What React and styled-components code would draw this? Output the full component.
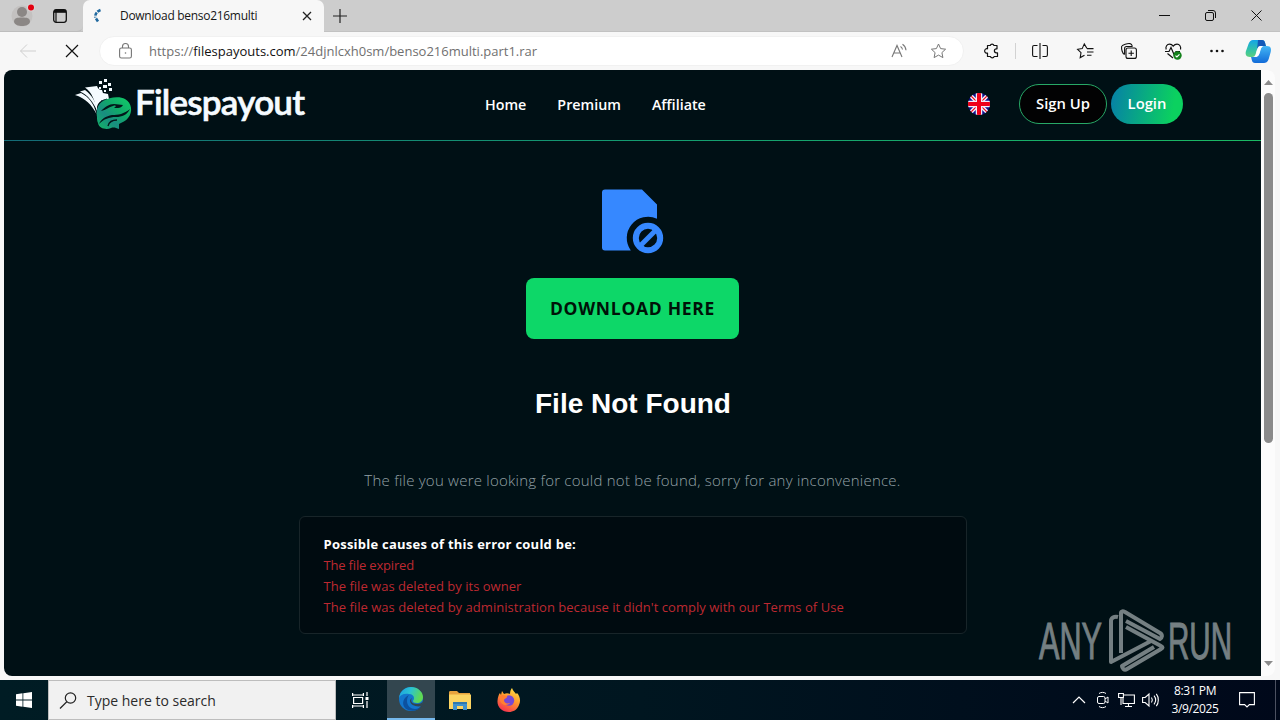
import React from "react";
import styled, { createGlobalStyle } from "styled-components";

const GlobalStyle = createGlobalStyle`
  * {
    box-sizing: border-box;
  }
  body {
    margin: 0;
    overflow: hidden;
    font-family: "Open Sans", "Noto Sans", sans-serif;
  }
  svg {
    display: block;
    flex: none;
    overflow: visible;
  }
`;

const Screen = styled.div`
  display: flex;
  flex-direction: column;
  position: relative;
  width: 1280px;
  height: 720px;
  background: #f7f7f7;
`;

const Text = styled.span`
  font-size: ${(props) => props.$size || 14}px;
  font-weight: ${(props) => props.$weight || 400};
  letter-spacing: ${(props) => props.$spacing || 0}px;
  color: ${(props) => props.$color || "inherit"};
  white-space: nowrap;
`;

/* ---------- browser tabs ---------- */

const TabBar = styled.div`
  display: flex;
  height: 32px;
  background: #cdcdcd;
  border-bottom: 1px solid #c2c2c2;
`;

const TabTools = styled.div`
  display: flex;
  align-items: center;
  gap: 17px;
  width: 83px;
  height: 32px;
  padding-left: 11px;
  border-bottom: 1px solid #bdbdbd;
  border-radius: 0 0 6px 0;
`;

const Tab = styled.div`
  display: flex;
  align-items: center;
  width: 241px;
  height: 32px;
  padding: 0 12px 0 9px;
  background: #f7f7f7;
  border-radius: 7px 7px 0 0;
`;

const TabTitle = styled(Text)`
  flex: 1;
  margin-left: 16px;
  padding-bottom: 1px;
`;

const NewTab = styled.div`
  display: flex;
  align-items: center;
  flex: 1;
  padding-left: 9px;
`;

const WindowControls = styled.div`
  display: flex;
  align-items: center;
  gap: 35px;
  padding-right: 18px;
`;

function Tabs() {
  return (
    <TabBar>
      <TabTools>
        <svg width="24" height="24" viewBox="0 0 24 24">
          <circle cx="11" cy="12" r="10.5" fill="#c3c1c0" />
          <circle cx="11" cy="8" r="5" fill="#8b8785" />
          <path d="M3 18c0-4 3-4.500 8-4.500s8 .5 8 4.500c-1 3-4.500 4-8 4s-7-1-8-4z" fill="#8b8785" />
          <circle cx="20" cy="3.500" r="4" fill="#d6d2d2" />
          <circle cx="20" cy="3.500" r="3" fill="#e3000f" />
        </svg>
        <svg width="16" height="16" viewBox="0 0 16 16" fill="none" stroke="#111">
          <rect x="1.700" y="1.700" width="12.600" height="12.600" rx="2.500" strokeWidth="1.300" />
          <path d="M2 3.300h12" strokeWidth="3" />
          <path d="M4 4v10" strokeWidth="1.200" />
        </svg>
      </TabTools>
      <Tab>
        <svg width="12" height="16" viewBox="0 0 12 16" fill="none" stroke="#20699f">
          <path d="M8.500 2C4.500 3.500 3 6.500 3.300 9.500" strokeWidth="2.600" strokeDasharray="3.500 1" />
          <path d="M4 10.500l2 3" strokeWidth="2.600" />
        </svg>
        <TabTitle $size={12} $spacing={-0.3} $color="#161616">
          Download benso216multi
        </TabTitle>
        <svg width="10" height="10" viewBox="0 0 10 10" stroke="#222" strokeWidth="1.300">
          <path d="M1 1l8 8M9 1l-8 8" />
        </svg>
      </Tab>
      <NewTab>
        <svg width="14" height="14" viewBox="0 0 14 14" stroke="#222" strokeWidth="1.200">
          <path d="M7 0v14M0 7h14" />
        </svg>
      </NewTab>
      <WindowControls>
        <svg width="11" height="11" viewBox="0 0 11 11" stroke="#111">
          <path d="M0 5.500h11" />
        </svg>
        <svg width="11" height="11" viewBox="0 0 11 11" fill="none" stroke="#111">
          <rect x=".5" y="2.500" width="8" height="8" rx="1.500" />
          <path d="M3 .5h5a2.500 2.500 0 0 1 2.500 2.500v5" />
        </svg>
        <svg width="11" height="11" viewBox="0 0 11 11" stroke="#111">
          <path d="M.5.5l10 10M10.500.5l-10 10" />
        </svg>
      </WindowControls>
    </TabBar>
  );
}

/* ---------- address bar ---------- */

const Toolbar = styled.div`
  display: flex;
  align-items: center;
  height: 38px;
  padding-left: 19px;
`;

const StopIcon = styled.svg`
  margin: 0 21px 0 29px;
`;

const AddressField = styled.div`
  display: flex;
  align-items: center;
  width: 865px;
  height: 30px;
  padding: 0 16px 0 19px;
  background: #fff;
  border: 1px solid #f1f1f1;
  border-radius: 15px;
`;

const Url = styled(Text)`
  flex: 1;
  margin-left: 17px;
  color: #707070;

  b {
    font-weight: 400;
    color: #111;
  }
`;

const ReadAloud = styled.div`
  margin-right: 22px;
`;

const ToolbarIcons = styled.div`
  display: flex;
  align-items: center;
  margin-left: 20px;
`;

const Divider = styled.div`
  width: 1px;
  height: 16px;
  margin: 0 16px 0 15px;
  background: #d2d2d2;
`;

const IconSlot = styled.div`
  width: ${(props) => props.$width || 44}px;
`;

const STAR = "M8 1l2.100 4.600 5 .6-3.700 3.400 1 5L8 12.100l-4.400 2.500 1-5L.9 6.200l5-.6z";

function AddressBar() {
  return (
    <Toolbar>
      <svg width="18" height="16" viewBox="0 0 18 16" fill="none" stroke="#cfcfcf">
        <path d="M17 8H1.500M8 1.500L1.500 8 8 14.500" />
      </svg>
      <StopIcon width="12" height="12" viewBox="0 0 12 12" stroke="#111" strokeWidth="1.200">
        <path d="M0 0l12 12M12 0L0 12" />
      </StopIcon>
      <AddressField>
        <svg width="13" height="17" viewBox="0 0 13 17" fill="none" stroke="#757575" strokeWidth="1.100">
          <rect x=".6" y="5" width="11.800" height="10" rx="1.800" />
          <path d="M3.500 5V3.500a3 3 0 0 1 6 0V5" />
          <circle cx="6.500" cy="10" r=".8" fill="#757575" stroke="none" />
        </svg>
        <Url $size={13}>
          https://<b>filespayouts.com</b>/24djnlcxh0sm/benso216multi.part1.rar
        </Url>
        <ReadAloud>
          <svg width="17" height="16" viewBox="0 0 17 16" fill="none" stroke="#777" strokeWidth="1.100">
            <path d="M1 14L6 2.500 11 14M2.700 10h6.600M9.500 3.500c1.200.7 1.800 1.700 2 3M11.500 1.200c2.200 1.400 3.300 3.300 3.500 6" />
          </svg>
        </ReadAloud>
        <svg width="17" height="16" viewBox="0 0 16 16" fill="none" stroke="#777" strokeLinejoin="round">
          <path d={STAR} />
        </svg>
      </AddressField>
      <ToolbarIcons>
        <svg width="16" height="16" viewBox="0 0 16 16" fill="none" stroke="#111" strokeWidth="1.200">
          <path
            d="M3.500 2.500h2.700a2 2 0 0 1 3.800 0h3v3.300h-.6a2 2 0 0 0 0 4h1.100v3.700h-3.300a2 2 0 0 1-3.800 0H3.500V10a2.200 2.200 0 1 1 0-4.200z"
            strokeLinejoin="round"
          />
        </svg>
        <Divider />
        <IconSlot $width={45}>
          <svg width="16" height="16" viewBox="0 0 16 16" fill="none" stroke="#111" strokeWidth="1.100">
            <path d="M8 0v16M5.500 2.500H2A1.500 1.500 0 0 0 .6 4v8A1.500 1.500 0 0 0 2 13.500h3.500M10.500 2.500H14A1.500 1.500 0 0 1 15.400 4v8a1.500 1.500 0 0 1-1.400 1.500h-3.500" />
          </svg>
        </IconSlot>
        <IconSlot>
          <svg width="17" height="16" viewBox="0 0 17 16" fill="none" stroke="#111" strokeWidth="1.100">
            <path d="M10 5.600L7.300.9 5.200 5.600l-4.600.7L4 9.700l-.8 4.900 4.300-2.400M10 5.600h6.500M10 9h6.500M10 12.300h4.500" />
          </svg>
        </IconSlot>
        <IconSlot>
          <svg width="16" height="16" viewBox="0 0 16 16" fill="none" stroke="#111" strokeWidth="1.100">
            <rect x="5" y="5" width="10.400" height="10.400" rx="2" />
            <path d="M10.200 7.500v5.400M7.500 10.200h5.400M3.500 11.500C1.500 11 .3 6 .6 3.500 1 1.500 7 .3 9 .6c1.200.2 2 1 2.200 2.400M3.600 11.500V5.500c0-1.200.8-2 2-2h6" />
          </svg>
        </IconSlot>
        <IconSlot $width={45}>
          <svg width="17" height="17" viewBox="0 0 17 17" fill="none" stroke="#111" strokeWidth="1.200">
            <path d="M1.200 6.500C.2 3.500 2 1.200 4.600 1.200 6.500 1.200 7.500 2.200 8.200 3.200 9 2.200 10 1.200 12 1.200c2.500 0 4.300 2.300 3.500 5.300M0 8.500h4l2-4 3 7 2-3h4M2.500 10.500L8 15" />
            <circle cx="12.500" cy="12.500" r="4.200" fill="#13811b" stroke="none" />
            <path d="M10.500 12.600l1.400 1.400 2.600-2.700" stroke="#fff" />
          </svg>
        </IconSlot>
        <IconSlot $width={36}>
          <svg width="14" height="4" viewBox="0 0 14 4" fill="#111">
            <circle cx="1.500" cy="2" r="1.300" />
            <circle cx="7" cy="2" r="1.300" />
            <circle cx="12.500" cy="2" r="1.300" />
          </svg>
        </IconSlot>
        <svg width="25" height="23" viewBox="0 0 25 23">
          <defs>
            <linearGradient id="pilotLeft" x1="0" y1="0" x2="0" y2="1">
              <stop offset="0" stopColor="#14a5e8" />
              <stop offset=".65" stopColor="#37c5a0" />
              <stop offset="1" stopColor="#5dcf7e" />
            </linearGradient>
            <linearGradient id="pilotRight" x1="0" y1="0" x2="0" y2="1">
              <stop offset="0" stopColor="#44b7f5" />
              <stop offset="1" stopColor="#126bd8" />
            </linearGradient>
          </defs>
          <path d="M7 0h9c3 0 3 3 4 6h-5c-3 0-4 3-5 7-1 3-2 4-4 4H4c-4 0-5-3-4-6l2.500-7C3.500 1.500 5 0 7 0z" fill="url(#pilotLeft)" />
          <path d="M12 0h4c3 0 3 3 4 6h-5c-2 0-3 1-4 4z" fill="#1459b8" />
          <path d="M18 23H9c-3 0-3-3-4-6h3c4 0 5-2 6-6 1-3.500 2-5 4-5h3c4 0 4.500 3 3.700 6l-2 7c-1 3-3 4-4.700 4z" fill="url(#pilotRight)" />
          <path d="M11.500 8.500c.6-1.700 1.500-2.500 3-2.500H17c-1.700 1-2.300 3-3 6-.8 3-2 5-5 5 1.200-2 1.500-5 2.500-8.500z" fill="#fff" />
        </svg>
      </ToolbarIcons>
    </Toolbar>
  );
}

/* ---------- site ---------- */

const Viewport = styled.div`
  display: flex;
  height: 606px;
  margin: 0 5px 4px 4px;
  overflow: hidden;
  border-radius: 8px;
  background: #fcfcfc;
`;

const Page = styled.main`
  position: relative;
  width: 1257px;
  height: 606px;
  background: #001015;
`;

const Header = styled.header`
  display: grid;
  grid-template-columns: 410px 483px 51px auto;
  align-items: center;
  height: 71px;
  padding: 0 0 3px 71px;
  border-bottom: 1px solid;
  border-image: linear-gradient(90deg, #146b77, #149b70 50%, #1bb963) 1;
`;

const Nav = styled.nav`
  display: flex;
  gap: 31px;
  padding-top: 1px;
  color: #fff;
`;

const Actions = styled.div`
  display: flex;
  gap: 4px;
`;

const PillButton = styled.button`
  display: flex;
  align-items: center;
  justify-content: center;
  width: ${(props) => props.$width}px;
  height: 40px;
  padding: 0 0 1px;
  font-family: inherit;
  color: #fff;
  background: ${(props) =>
    props.$filled ? "linear-gradient(100deg, #067fa8, #0bd15f 85%)" : "#020203"};
  border: ${(props) => (props.$filled ? "0" : "1px solid #27a866")};
  border-radius: 20px;
`;

const Content = styled.section`
  display: flex;
  flex-direction: column;
  align-items: center;
  padding-top: 48px;
`;

const DownloadButton = styled.button`
  width: 213px;
  height: 61px;
  margin-top: 24px;
  padding: 0 0 2px;
  font-family: inherit;
  color: #001208;
  background: #0dd768;
  border: 0;
  border-radius: 8px;
`;

const Title = styled.h1`
  margin: 48px 0 0 1px;
  font-family: "Liberation Sans", Arial, sans-serif;
  font-size: 28px;
  line-height: 34px;
  color: #fff;
`;

const Message = styled.p`
  margin: 46px 0 0;
  line-height: 26px;
  color: #94a1a6;
`;

const Causes = styled.div`
  display: flex;
  flex-direction: column;
  width: 668px;
  height: 118px;
  margin-top: 23px;
  padding: 17px 24px;
  line-height: 21px;
  background: #000b10;
  border: 1px solid #182529;
  border-radius: 6px;
`;

const Watermark = styled.div`
  position: absolute;
  right: 27px;
  bottom: 1px;
  opacity: 0.55;
`;

const Scrollbar = styled.div`
  display: flex;
  flex-direction: column;
  align-items: center;
  justify-content: space-between;
  width: 14px;
  padding: 10px 0;
`;

const Thumb = styled.div`
  width: 9px;
  height: 350px;
  margin: 8px 0 auto;
  background: #8b8b8b;
  border-radius: 5px;
`;

function Logo() {
  return (
    <svg width="234" height="54" viewBox="0 0 234 54">
      <defs>
        <linearGradient id="dragon" x1="0" y1="1" x2="1" y2="0">
          <stop offset="0" stopColor="#12b864" />
          <stop offset=".35" stopColor="#198d80" />
          <stop offset=".6" stopColor="#11a96a" />
          <stop offset="1" stopColor="#10cf68" />
        </linearGradient>
      </defs>
      <g transform="translate(0 2)">
        <g fill="#f4fbff">
          <path d="M0 16l6-2c8 4 13 11 15.500 21C17 26 10 19 0 16z" />
          <path d="M5 12.500l5-1.500c7 5 11 12 12.500 21C18 23 13 16 5 12.500z" />
          <path d="M10 8.500L22 7c1 3 3 4 5 4l1 3 5 1 1 5c-5 0-11 2-12 8l-.5 4C20 22 17 13 10 8.500z" />
          <path d="M24 2h3v3h-3zM29 0h3v3h-3zM33 4h3v3h-3zM28 6h4v3h-4zM24 8h2v2h-2zM34 9h3v3h-3zM29 11h2v2h-2z" />
        </g>
        <path d="M26 22l6-2M25 25l5-1.500" stroke="#12303a" />
        <path
          d="M22 38c-1-6 0-12 6-16 6-4 17-5 22-2 7 4 8 13 3 19-2 3-6 4-9 6v5c-3-1-5-2-8-1-4 2-12 1-13-5-1-2-1-4-1-6z"
          fill="url(#dragon)"
        />
        <path
          d="M26 32c4-4 8-7 13-7l9 1c-1 2-3 3-5 3l-4 0c3-2 2-3-1-2-4 1-7 4-12 5z"
          fill="#03171a"
        />
        <path
          d="M24 45c2-5 7-8 13-9 6 0 12-1 18-6-3 6-8 8-14 8-7 0-12 2-17 7z"
          fill="#03171a"
        />
        <path d="M33 47c1-4 4-6 9-6" fill="none" stroke="#03171a" strokeWidth="1.300" />
      </g>
      <text
        x="60"
        y="38"
        fill="#f5fbff"
        stroke="#f5fbff"
        strokeWidth=".6"
        fontFamily="Lato, sans-serif"
        fontSize="35"
        fontWeight="600"
        textLength="170"
        lengthAdjust="spacing"
      >
        Filespayout
      </text>
    </svg>
  );
}

function Flag() {
  return (
    <svg width="22" height="22" viewBox="0 0 22 22">
      <clipPath id="round">
        <circle cx="11" cy="11" r="11" />
      </clipPath>
      <g clipPath="url(#round)">
        <path d="M0 0h22v22H0z" fill="#10108c" />
        <path d="M0 0l22 22M22 0L0 22" stroke="#f3eef8" strokeWidth="4" />
        <path d="M0 0l22 22M22 0L0 22" stroke="#f00018" strokeWidth="1.200" />
        <path d="M11 0v22M0 11h22" stroke="#f3eef8" strokeWidth="6.500" />
        <path d="M11 0v22M0 11h22" stroke="#f00018" strokeWidth="4" />
      </g>
    </svg>
  );
}

function BlockedFile() {
  return (
    <svg width="62" height="65" viewBox="0 0 62 65">
      <path
        d="M3 .5h37l15 15v14.200A21.300 21.300 0 0 0 28.800 61.500H3a3 3 0 0 1-3-3v-55a3 3 0 0 1 3-3z"
        fill="#3688ff"
      />
      <circle cx="46" cy="49" r="12.200" fill="none" stroke="#3688ff" strokeWidth="6" />
      <path d="M38 57l16-16" stroke="#3688ff" strokeWidth="5" />
    </svg>
  );
}

function AnyRun() {
  const font = {
    fill: "#d4dadb",
    stroke: "#d4dadb",
    strokeWidth: 1,
    fontFamily: "'Liberation Sans', Arial, sans-serif",
    fontSize: 51,
    lengthAdjust: "spacingAndGlyphs",
  };
  return (
    <svg width="198" height="66" viewBox="0 0 198 66">
      <text x="3" y="50" textLength="63" {...font}>
        ANY
      </text>
      <g fill="none" stroke="#d4dadb" strokeWidth="4" strokeLinejoin="round">
        <path d="M82 8c-4-1-7 1-7 4v41l40-21" />
        <path d="M85 44V4c0-2 2-2 4-1l35 21c3 2 2 5 0 6L90 12" />
        <path d="M90 18l35 19c2 1 2 2 0 3L91 60c-3 2-5-1-5-3l32-19" />
      </g>
      <text x="132" y="50" textLength="64" {...font}>
        RUN
      </text>
    </svg>
  );
}

const causes = [
  { text: "The file expired", spacing: -0.18 },
  { text: "The file was deleted by its owner", spacing: 0.02 },
  {
    text: "The file was deleted by administration because it didn't comply with our Terms of Use",
    spacing: 0.035,
  },
];

function Site() {
  return (
    <Viewport>
      <Page>
        <Header>
          <Logo />
          <Nav>
            <Text $weight={600} $size={14.3}>
              Home
            </Text>
            <Text $weight={600} $size={14.3}>
              Premium
            </Text>
            <Text $weight={600} $size={14.3}>
              Affiliate
            </Text>
          </Nav>
          <Flag />
          <Actions>
            <PillButton $width={88}>
              <Text $weight={600} $size={14.8}>
                Sign Up
              </Text>
            </PillButton>
            <PillButton $width={72} $filled>
              <Text $weight={600} $size={14.8}>
                Login
              </Text>
            </PillButton>
          </Actions>
        </Header>
        <Content>
          <BlockedFile />
          <DownloadButton>
            <Text $size={17.5} $weight={700} $spacing={0.7}>
              DOWNLOAD HERE
            </Text>
          </DownloadButton>
          <Title>File Not Found</Title>
          <Message>
            <Text $size={15} $weight={300} $spacing={0.235}>
              The file you were looking for could not be found, sorry for any inconvenience.
            </Text>
          </Message>
          <Causes>
            <Text $size={13} $weight={700} $spacing={0.24} $color="#fff">
              Possible causes of this error could be:
            </Text>
            {causes.map(({ text, spacing }) => (
              <Text key={text} $size={13} $spacing={spacing} $color="#bd2931">
                {text}
              </Text>
            ))}
          </Causes>
        </Content>
        <Watermark>
          <AnyRun />
        </Watermark>
      </Page>
      <Scrollbar>
        <svg width="9" height="5" viewBox="0 0 9 5" fill="#8b8b8b">
          <path d="M0 5L4.500 0 9 5z" />
        </svg>
        <Thumb />
        <svg width="9" height="5" viewBox="0 0 9 5" fill="#8b8b8b">
          <path d="M0 0l4.500 5L9 0z" />
        </svg>
      </Scrollbar>
    </Viewport>
  );
}

/* ---------- taskbar ---------- */

const TaskbarRow = styled.footer`
  display: flex;
  height: 40px;
  background: linear-gradient(90deg, #001c24, #001620 50%, #00081a);
`;

const TaskButton = styled.div`
  display: flex;
  align-items: center;
  justify-content: center;
  width: ${(props) => props.$width || 49}px;
  padding-right: ${(props) => props.$nudge || 0}px;
  background: ${(props) => (props.$active ? "#33464f" : "transparent")};
  border-bottom: ${(props) => (props.$active ? "2px solid #76b9ed" : "0")};
`;

const SearchBox = styled.div`
  display: flex;
  align-items: center;
  gap: 10px;
  width: 288px;
  padding: 0 0 0 11px;
  background: #f1f1f1;
  border: 1px solid #bdbdbd;
  color: #2b2b2b;
`;

const Tray = styled.div`
  display: flex;
  align-items: center;
  gap: 7px;
  margin-left: auto;
`;

const Clock = styled.div`
  display: flex;
  flex-direction: column;
  align-items: center;
  width: 56px;
  line-height: 18px;
  color: #fff;
  margin: 0 9px 0 1px;
`;

const PeekStrip = styled.div`
  width: 5px;
  height: 40px;
  margin-left: 13px;
  border-left: 1px solid #4c5161;
`;

function Taskbar() {
  return (
    <TaskbarRow>
      <TaskButton $width={48}>
        <svg width="16" height="16" viewBox="0 0 16 16" fill="#fff">
          <path d="M0 2.200L6.500 1.300v6.200H0zM7.300 1.200L16 0v7.500H7.300zM0 8.400h6.500v6.300L0 13.800zM7.300 8.400H16V16l-8.700-1.200z" />
        </svg>
      </TaskButton>
      <SearchBox>
        <svg width="17" height="17" viewBox="0 0 17 17" fill="none" stroke="#222" strokeWidth="1.200">
          <circle cx="10.500" cy="6" r="5.200" />
          <path d="M6.800 9.800L0 16.500" />
        </svg>
        <Text $size={14}>Type here to search</Text>
      </SearchBox>
      <TaskButton $width={51} $nudge={3}>
        <svg width="17" height="17" viewBox="0 0 17 17" fill="none" stroke="#fff" strokeWidth="1.200">
          <path d="M.6 4V1M.6 3h10.800M11.400 1v3M1.600 5.500h9v6h-9zM.6 16v-3M.6 14h10.800M11.400 16v-3M15 0v4M15 9v7" />
          <path d="M13.500 5h3v3h-3z" fill="#fff" stroke="none" />
        </svg>
      </TaskButton>
      <TaskButton $width={48} $active>
        <svg width="24" height="24" viewBox="0 0 24 24">
          <defs>
            <linearGradient id="edgeTop" x1="0" y1="0" x2="1" y2=".3">
              <stop offset="0" stopColor="#1a9de3" />
              <stop offset=".5" stopColor="#2bc3d2" />
              <stop offset="1" stopColor="#5fd952" />
            </linearGradient>
          </defs>
          <circle cx="12" cy="12" r="12" fill="#1376cc" />
          <path d="M0 11C1 4 6 0 12 0c7 0 12 5 12 10 0 4-3 6-6 6-3 0-4-1-4-2s1-1 1-3-2-4-5-4C5 6 1 8 0 11z" fill="url(#edgeTop)" />
          <path d="M8 14c0 5 4 8 8 8 3 0 5-1 6.500-3C19 25 10 25 6 21c-4-5-1-11 4-13-1 1-2 3-2 6z" fill="#0c519f" />
          <path d="M13 11c-2 3 0 6 5 6 2.500 0 4.500-.8 6-2.500L22.500 19c-5 1.500-11-1-11.500-5 0-1.500 1-2.500 2-3z" fill="#33464f" />
        </svg>
      </TaskButton>
      <TaskButton>
        <svg width="22" height="19" viewBox="0 0 22 19">
          <path d="M0 1.500C0 .5.500 0 1.500 0H8l2 2h11v16H0z" fill="#e8a33d" />
          <path d="M0 3.500h22V18H0z" fill="#fcd462" />
          <path d="M4 11h14v8h-4v-4H8v4H4z" fill="#3f91cd" />
          <path d="M4 11h14v2H4z" fill="#2f78ae" />
        </svg>
      </TaskButton>
      <TaskButton>
        <svg width="24" height="24" viewBox="0 0 24 24">
          <defs>
            <linearGradient id="fox" x1=".8" y1="0" x2=".3" y2="1">
              <stop offset="0" stopColor="#ffe345" />
              <stop offset=".45" stopColor="#ff9a2e" />
              <stop offset="1" stopColor="#f5314f" />
            </linearGradient>
          </defs>
          <path d="M5 3l2 3c2-1 4-1 6 0 0-3 1-5 2-6 1 3 3 4 4 6l1-1c3 3 4 8 2 12-2 5-6 7-10 7C5 24 0 19 .5 13 .7 9 2 6 3 5l1 2z" fill="url(#fox)" />
          <circle cx="12" cy="12.500" r="5.200" fill="#7548d6" />
          <path d="M3 8c3-2 5 0 7 0 1 2-2 2-3 4 0 3 3 4 6 3-2 3-9 3-10-3z" fill="#ff7f31" />
        </svg>
      </TaskButton>
      <Tray>
        <svg width="18" height="16" viewBox="0 0 18 16" fill="none" stroke="#fff" strokeWidth="1.200">
          <path d="M3 11l6-6 6 6" />
        </svg>
        <svg width="16" height="18" viewBox="0 0 16 18" fill="none" stroke="#fff">
          <rect x="2.500" y="5.500" width="7.500" height="7" rx="1.500" />
          <path d="M10 8l3-2v6l-3-2M4 2.500c2-1.500 5-1.500 7 0M4 15.500c2 1.500 5 1.500 7 0" />
        </svg>
        <svg width="17" height="16" viewBox="0 0 17 16" fill="none" stroke="#fff" strokeWidth="1.100">
          <path d="M6 3h10.400v8.500H5V6M10.500 11.500v3M7 14.500h7M.6 1.500h4.800v4H.6zM3 5.500V13" />
        </svg>
        <svg width="17" height="16" viewBox="0 0 17 16" fill="none" stroke="#fff" strokeWidth="1.100">
          <path d="M.6 5.500h2.600L7 2v12l-3.800-3.500H.6zM9.500 5.500c1 1.500 1 3.500 0 5M12 3.700c2 2.500 2 6 0 8.600M14.300 1.800c2.700 3.500 2.700 9 0 12.400" />
        </svg>
        <Clock>
          <Text $size={12} $spacing={-0.4}>
            8:31 PM
          </Text>
          <Text $size={12} $spacing={-0.4}>
            3/9/2025
          </Text>
        </Clock>
        <svg width="16" height="16" viewBox="0 0 16 16" fill="none" stroke="#fff" strokeWidth="1.100">
          <path d="M.6.6h14.800v12h-5L8 15l-2.400-2.400h-5z" />
        </svg>
        <PeekStrip />
      </Tray>
    </TaskbarRow>
  );
}

export default function App() {
  return (
    <>
      <GlobalStyle />
      <Screen>
        <Tabs />
        <AddressBar />
        <Site />
        <Taskbar />
      </Screen>
    </>
  );
}
